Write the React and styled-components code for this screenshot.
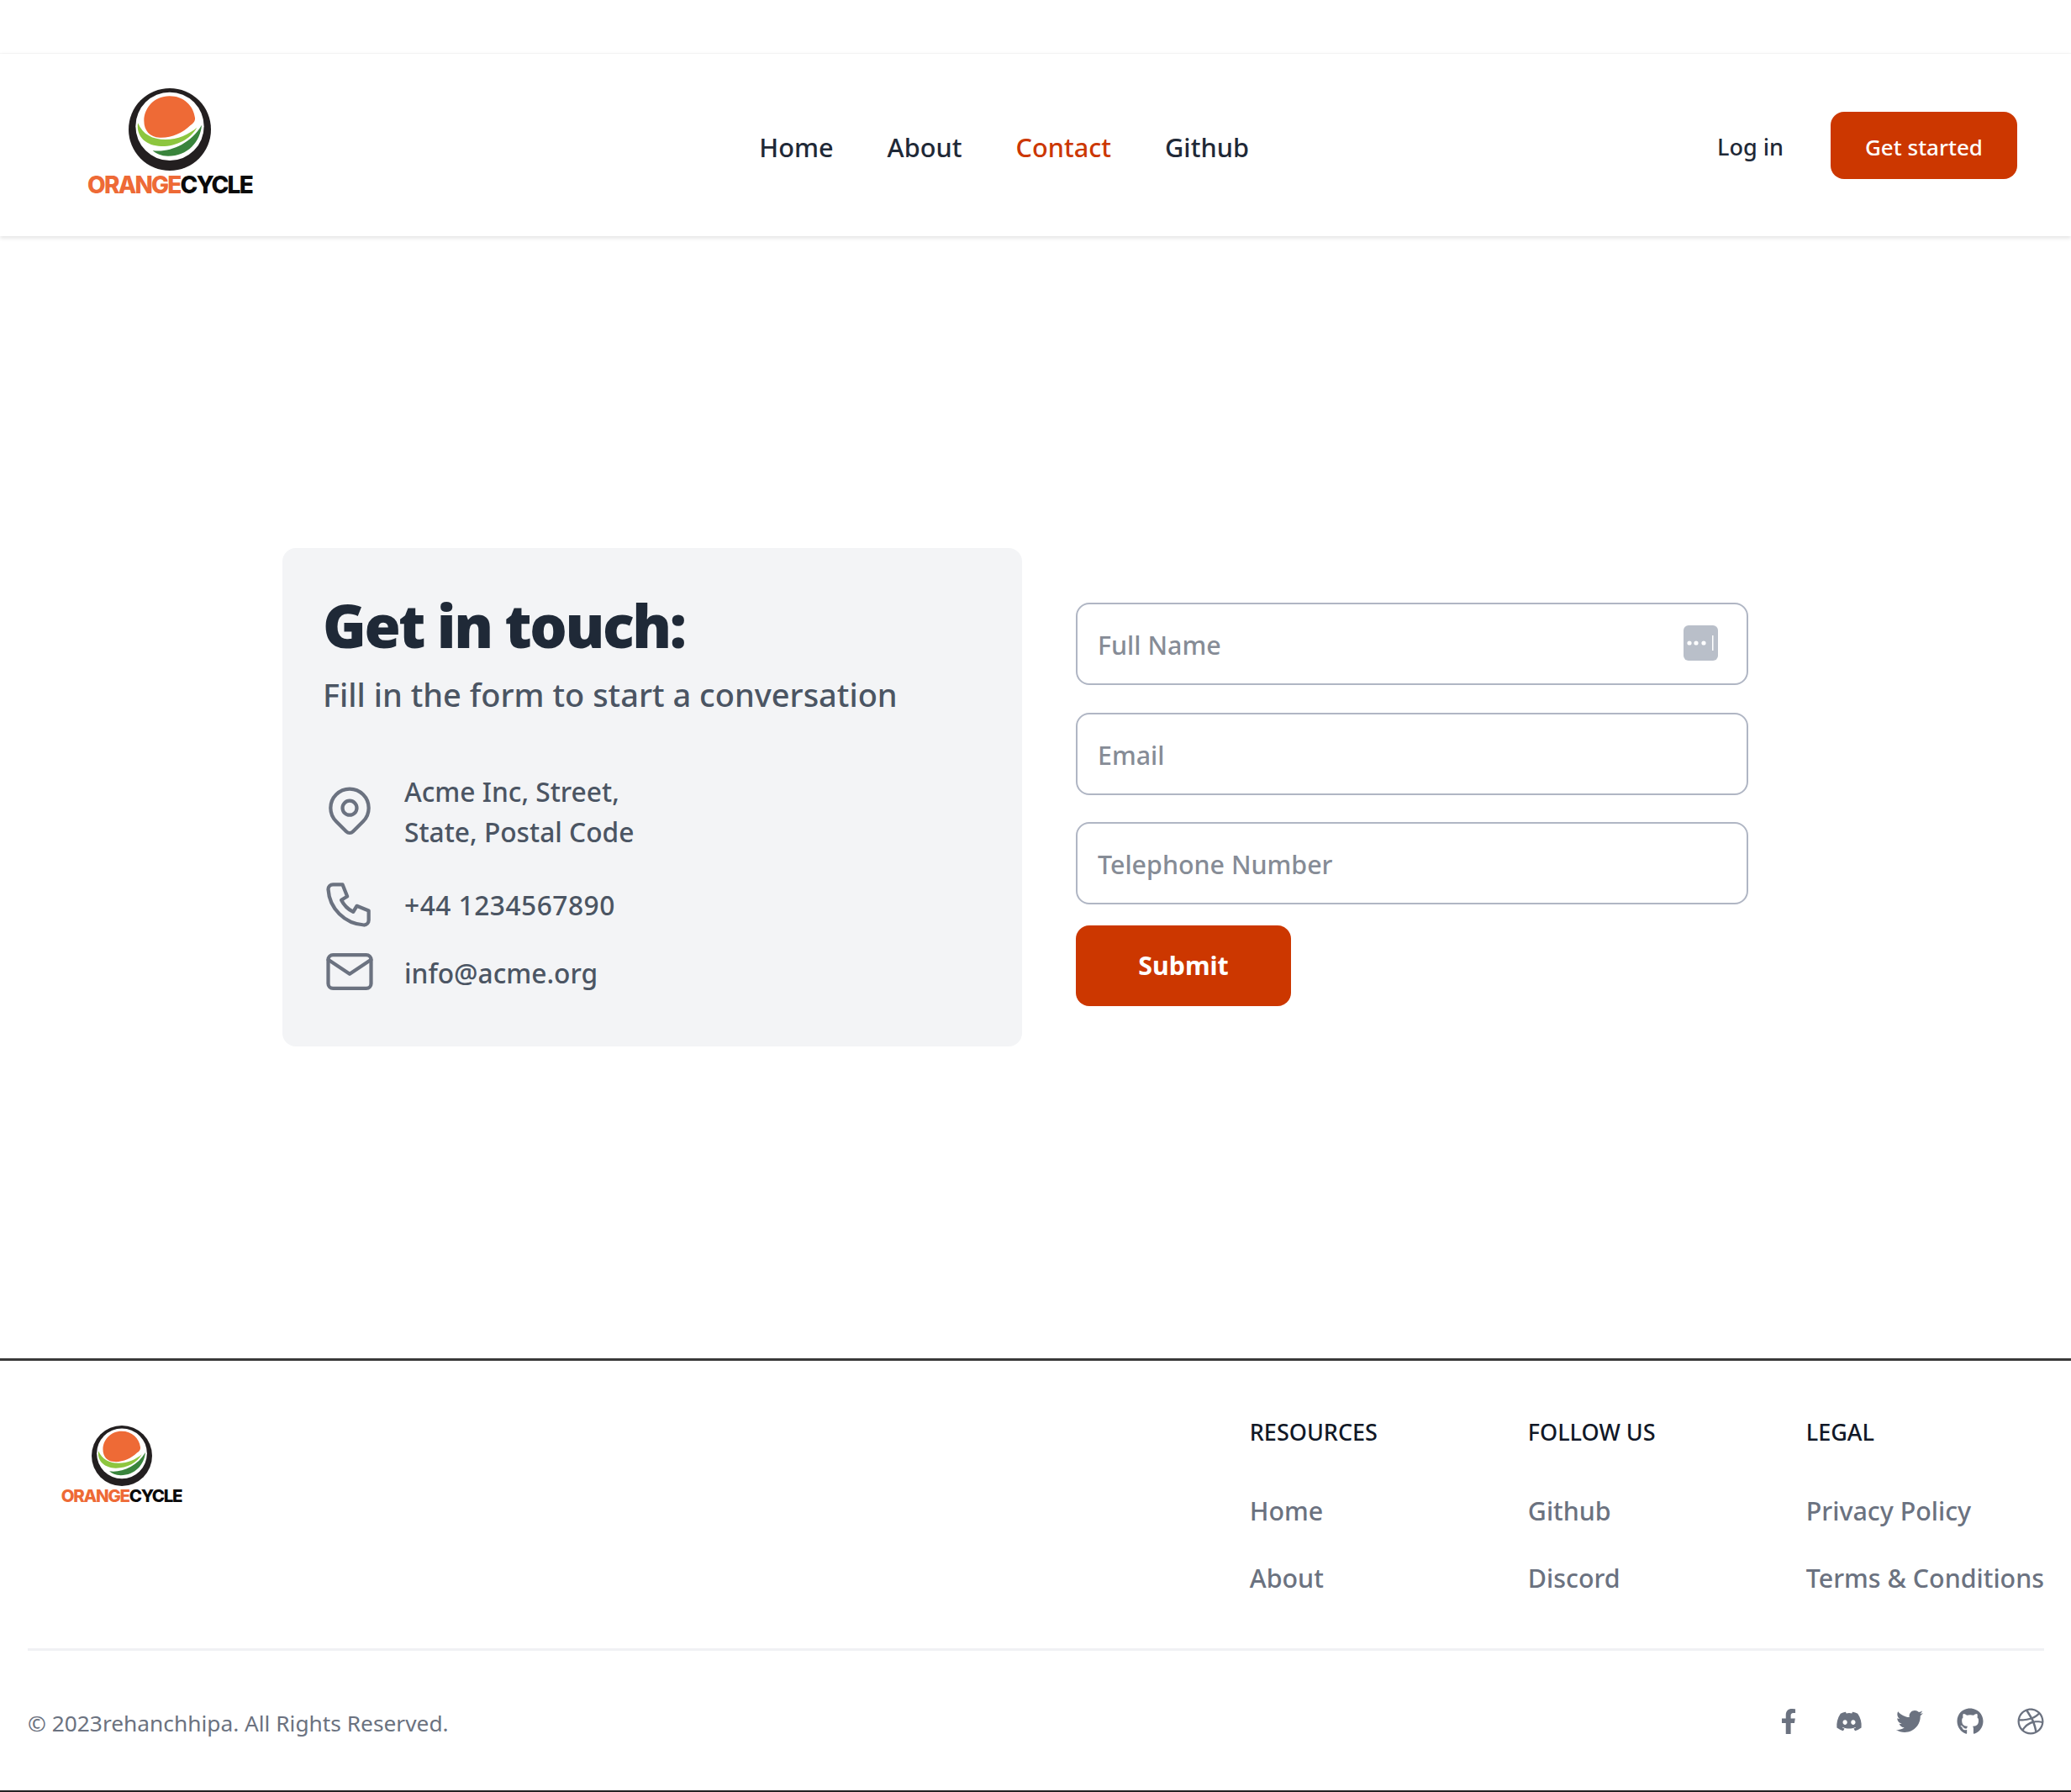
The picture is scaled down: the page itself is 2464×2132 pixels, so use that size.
import React from 'react';
import styled, { createGlobalStyle } from 'styled-components';
import { TbMapPin, TbPhone, TbMail } from 'react-icons/tb';
import { FaFacebookF, FaDiscord, FaTwitter, FaGithub, FaDribbble } from 'react-icons/fa';

const GlobalStyle = createGlobalStyle`
  * { box-sizing: border-box; }
  body {
    margin: 0;
    background: #fff;
    font-family: "Noto Sans", "Open Sans", sans-serif;
  }
`;

const Page = styled.div`
  width: 2464px;
  height: 2132px;
  overflow: hidden;
`;

const TopStrip = styled.div`
  height: 64px;
  border-bottom: 1px solid #f8f8f8;
`;

const Nav = styled.nav`
  height: 217px;
  padding: 0 64px;
  display: flex;
  align-items: center;
  justify-content: space-between;
  box-shadow: 0 2px 5px rgba(0, 0, 0, 0.12);
`;

const LogoBox = styled.div`
  width: ${(props) => props.$box}px;
  padding-right: ${(props) => (props.$small ? 0 : 6)}px;
  margin-top: ${(props) => (props.$small ? 14 : -6)}px;
  align-self: ${(props) => (props.$small ? 'flex-start' : 'center')};
  display: flex;
  flex-direction: column;
  align-items: center;
  gap: ${(props) => (props.$small ? 2 : 3)}px;
  line-height: 1;
`;

const LogoText = styled.div`
  font-family: Inter, sans-serif;
  font-weight: 800;
  font-size: ${(props) => (props.$small ? 20.5 : 28)}px;
  letter-spacing: ${(props) => (props.$small ? -1.3 : -1.8)}px;
  line-height: ${(props) => (props.$small ? 20 : 28)}px;
  color: #0a0a0a;
  white-space: nowrap;
  span { color: #ee6a36; }
`;

const Links = styled.div`
  display: flex;
  gap: 64px;
  margin-top: 5px;
`;

const NavLink = styled.a`
  font-size: 30.7px;
  font-weight: 500;
  color: ${(props) => (props.$active ? '#cc3700' : '#1f2937')};
`;

const Actions = styled.div`
  display: flex;
  align-items: center;
  gap: 56px;
`;

const LogIn = styled.a`
  padding-top: 4px;
  font-size: 27px;
  font-weight: 500;
  color: #1f2937;
`;

const Started = styled.a`
  width: 222px;
  height: 80px;
  padding-top: 4px;
  border-radius: 16px;
  background: #cc3700;
  color: #fff;
  font-size: 26px;
  font-weight: 500;
  display: flex;
  align-items: center;
  justify-content: center;
`;

const Main = styled.main`
  height: 1335px;
  padding: 371px 0 0 336px;
  display: flex;
  align-items: flex-start;
  gap: 64px;
`;

const Card = styled.section`
  width: 880px;
  height: 593px;
  padding: 45px 48px 0;
  background: #f3f4f6;
  border-radius: 16px;
`;

const Title = styled.h1`
  margin: 0 0 7px;
  font-size: 70px;
  line-height: 94px;
  font-weight: 900;
  letter-spacing: -2.4px;
  color: #1f2937;
`;

const Subtitle = styled.p`
  margin: 0 0 64px;
  font-size: 38px;
  line-height: 56px;
  font-weight: 500;
  color: #4b5563;
`;

const InfoRow = styled.div`
  display: flex;
  align-items: center;
  gap: 31px;
  margin: ${(props) => props.$mt || 0}px 0 0 -2px;
  font-size: 31.7px;
  line-height: 48px;
  font-weight: 500;
  color: #4b5563;
  letter-spacing: ${(props) => props.$spacing || 0}px;
  svg {
    color: #6b7280;
    flex: none;
    margin-top: -4px;
  }
`;

const Form = styled.form`
  width: 800px;
  padding-top: 65px;
  display: flex;
  flex-direction: column;
`;

const Field = styled.div`
  position: relative;
  margin-bottom: 32.5px;
`;

const Input = styled.input`
  display: block;
  width: 100%;
  height: 98px;
  padding: 3px 24px 0;
  border: 2px solid #b0b6c4;
  border-radius: 16px;
  background: #fff;
  font: 500 30.4px "Noto Sans", sans-serif;
  color: #1f2937;
  outline: none;
  &::placeholder { color: #868c96; opacity: 1; }
`;

const Autofill = styled.span`
  position: absolute;
  top: 27px;
  right: 36px;
  width: 41px;
  height: 42px;
  display: block;
`;

const Submit = styled.button`
  width: 256px;
  height: 96px;
  margin-top: -8px;
  border: 0;
  border-radius: 16px;
  background: #cc3700;
  color: #fff;
  font: 700 30.4px "Noto Sans", sans-serif;
`;

const Footer = styled.footer`
  height: 516px;
  padding: 0 32px 0 33px;
  border-top: 3px solid #3a3a3a;
  border-bottom: 2px solid #222;
`;

const FooterTop = styled.div`
  height: 345px;
  padding-top: 63px;
  display: flex;
  justify-content: space-between;
  border-bottom: 3px solid #f0f1f4;
`;

const Columns = styled.div`
  display: grid;
  grid-template-columns: 331px 331px auto;
`;

const ColumnTitle = styled.h2`
  margin: 0 0 50px;
  font-size: 27px;
  line-height: 44px;
  font-weight: 500;
  color: #111827;
  text-transform: uppercase;
`;

const FooterLink = styled.a`
  display: block;
  margin-bottom: 36px;
  font-size: 30.4px;
  line-height: 44px;
  font-weight: 500;
  color: #6b7280;
`;

const FooterBottom = styled.div`
  height: 165px;
  padding-top: 7px;
  display: flex;
  align-items: center;
  justify-content: space-between;
`;

const Copyright = styled.span`
  font-size: 26.3px;
  color: #6b7280;
`;

const Socials = styled.div`
  display: flex;
  gap: 40px;
  margin-top: -4px;
  color: #6b7280;
`;

const Social = styled.a`
  width: 32px;
  height: 32px;
  display: flex;
  align-items: center;
  justify-content: center;
`;

const Logo = ({ size, box, small }) => (
  <LogoBox $box={box} $small={small}>
    <svg width={size} height={size} viewBox="459 314 294 294">
      <circle cx="606" cy="461" r="147" fill="#231f20" />
      <circle cx="606" cy="450" r="122" fill="#fff" />
      <path
        fill="#ee6a36"
        d="M514 430C514 385 550 342 605 342C655 342 690 375 696 420C697 432 690 440 680 446C650 475 610 492 570 490C535 488 514 465 514 430Z"
      />
      <path
        fill="#8dc63f"
        d="M492 438C510 480 545 497 590 497C635 497 675 478 703 454C680 495 630 522 575 521C525 520 485 490 492 438Z"
      />
      <path
        fill="#39843c"
        d="M720 445C715 505 670 556 600 556C575 556 558 548 545 536C600 545 680 515 720 445Z"
      />
    </svg>
    <LogoText $small={small}>
      <span>ORANGE</span>CYCLE
    </LogoText>
  </LogoBox>
);

const columns = [
  { title: 'Resources', links: ['Home', 'About'] },
  { title: 'Follow us', links: ['Github', 'Discord'] },
  { title: 'Legal', links: ['Privacy Policy', 'Terms & Conditions'] },
];

const App = () => (
  <Page>
    <GlobalStyle />
    <TopStrip />
    <Nav>
      <Logo size={98} box={282} />
      <Links>
        <NavLink>Home</NavLink>
        <NavLink>About</NavLink>
        <NavLink $active>Contact</NavLink>
        <NavLink>Github</NavLink>
      </Links>
      <Actions>
        <LogIn>Log in</LogIn>
        <Started>Get started</Started>
      </Actions>
    </Nav>
    <Main>
      <Card>
        <Title>Get in touch:</Title>
        <Subtitle>Fill in the form to start a conversation</Subtitle>
        <InfoRow>
          <TbMapPin size={68} strokeWidth={1.5} />
          <div>
            Acme Inc, Street,
            <br />
            State, Postal Code
          </div>
        </InfoRow>
        <InfoRow $mt={31} $spacing={0.5}>
          <TbPhone size={68} strokeWidth={1.5} />
          <div>+44 1234567890</div>
        </InfoRow>
        <InfoRow $mt={17}>
          <TbMail size={68} strokeWidth={1.5} />
          <div>info@acme.org</div>
        </InfoRow>
      </Card>
      <Form>
        <Field>
          <Input placeholder="Full Name" />
          <Autofill>
            <svg width="41" height="42" viewBox="0 0 41 42">
              <rect width="41" height="42" rx="6" fill="#b9bfc9" />
              <circle cx="7" cy="21" r="2.6" fill="#fff" />
              <circle cx="15" cy="21" r="2.6" fill="#fff" />
              <circle cx="24" cy="21" r="2.6" fill="#fff" />
              <rect x="34" y="12" width="1.5" height="18" fill="#fff" />
            </svg>
          </Autofill>
        </Field>
        <Field>
          <Input placeholder="Email" />
        </Field>
        <Field>
          <Input placeholder="Telephone Number" />
        </Field>
        <Submit type="button">Submit</Submit>
      </Form>
    </Main>
    <Footer>
      <FooterTop>
        <Logo size={72} box={223} small />
        <Columns>
          {columns.map((col) => (
            <div key={col.title}>
              <ColumnTitle>{col.title}</ColumnTitle>
              {col.links.map((link) => (
                <FooterLink key={link}>{link}</FooterLink>
              ))}
            </div>
          ))}
        </Columns>
      </FooterTop>
      <FooterBottom>
        <Copyright>© 2023rehanchhipa. All Rights Reserved.</Copyright>
        <Socials>
          <Social><FaFacebookF size={30} /></Social>
          <Social><FaDiscord size={32} /></Social>
          <Social><FaTwitter size={32} /></Social>
          <Social><FaGithub size={32} /></Social>
          <Social><FaDribbble size={32} /></Social>
        </Socials>
      </FooterBottom>
    </Footer>
  </Page>
);

export default App;
